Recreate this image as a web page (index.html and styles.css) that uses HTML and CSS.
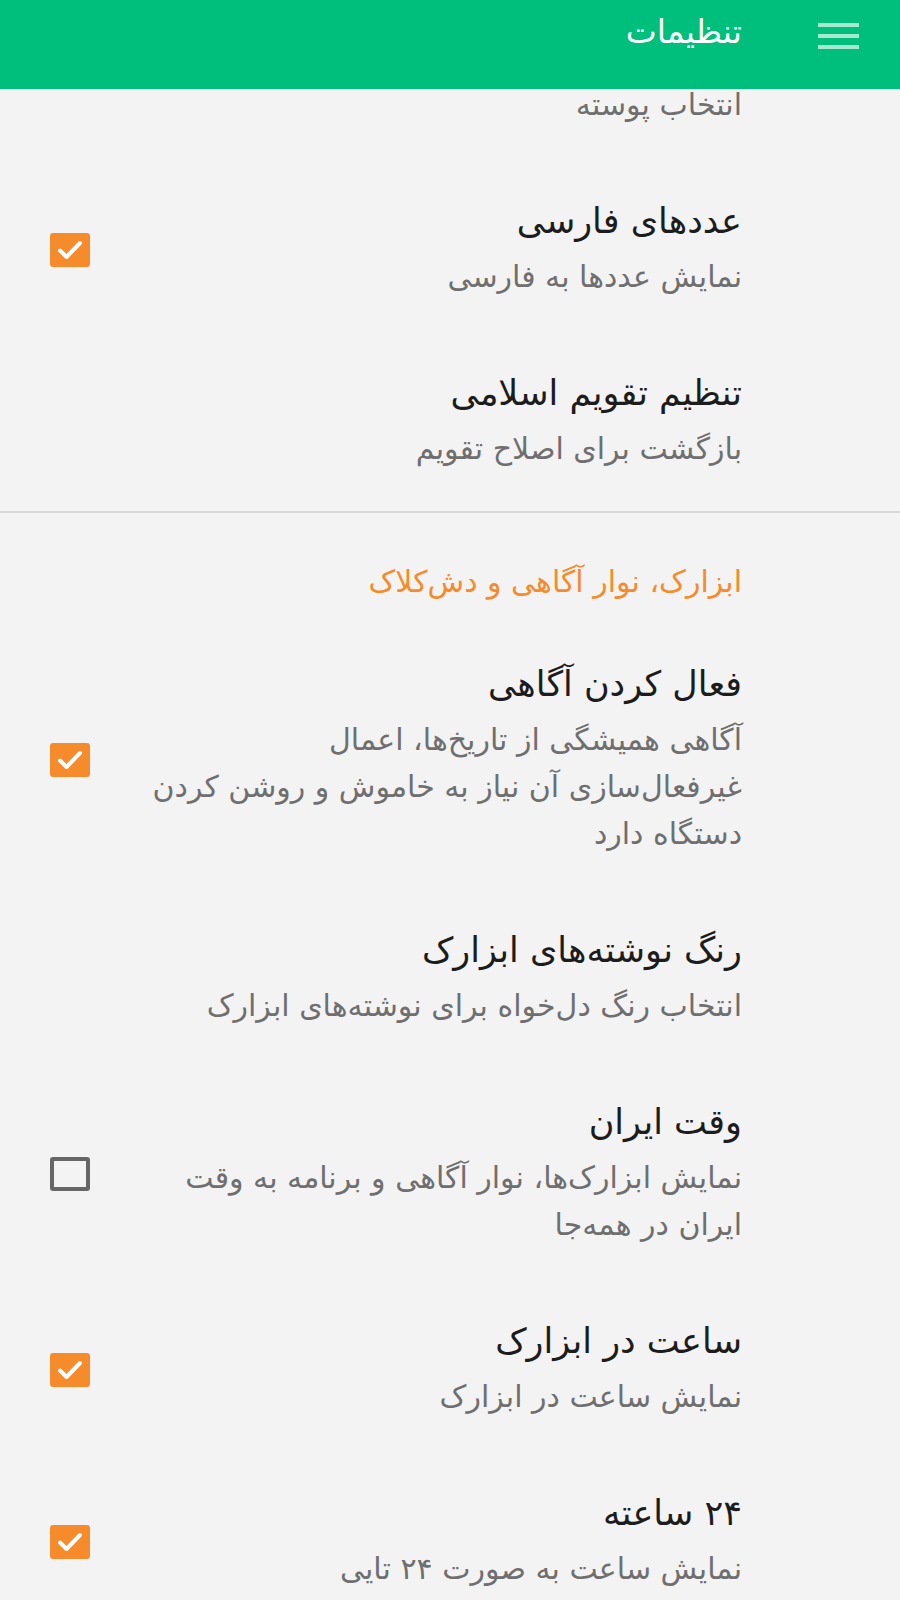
FILE: index.html
```html
<!DOCTYPE html>
<html lang="fa" dir="rtl">
<head>
  <meta charset="utf-8">
  <title>تنظیمات</title>
  <link rel="stylesheet" href="styles.css">
</head>

<body>
  <header class="appbar">
    <div class="menu-btn">
      <span></span>
      <span></span>
      <span></span>
    </div>
    <div class="appbar-title">تنظیمات</div>
  </header>

  <div class="pref-list">
    <!-- first item is scrolled under the toolbar, only its summary shows -->
    <div class="pref clipped">
      <div class="pref-text">
        <div class="pref-summary">انتخاب پوسته</div>
      </div>
    </div>

    <div class="pref">
      <div class="pref-text">
        <div class="pref-title">عددهای فارسی</div>
        <div class="pref-summary">نمایش عددها به فارسی</div>
      </div>
      <div class="pref-widget">
        <span class="checkbox checked"><svg viewBox="0 0 40 34"><polyline points="10,17.5 16.5,24 30,10"></polyline></svg></span>
      </div>
    </div>

    <div class="pref">
      <div class="pref-text">
        <div class="pref-title">تنظیم تقویم اسلامی</div>
        <div class="pref-summary">بازگشت برای اصلاح تقویم</div>
      </div>
    </div>

    <div class="divider"></div>

    <div class="category">ابزارک، نوار آگاهی و دش&zwnj;کلاک</div>

    <div class="pref">
      <div class="pref-text">
        <div class="pref-title">فعال کردن آگاهی</div>
        <div class="pref-summary">آگاهی همیشگی از تاریخ&zwnj;ها، اعمال<br>غیرفعال&zwnj;سازی آن نیاز به خاموش و روشن کردن<br>دستگاه دارد</div>
      </div>
      <div class="pref-widget">
        <span class="checkbox checked"><svg viewBox="0 0 40 34"><polyline points="10,17.5 16.5,24 30,10"></polyline></svg></span>
      </div>
    </div>

    <div class="pref">
      <div class="pref-text">
        <div class="pref-title">رنگ نوشته&zwnj;های ابزارک</div>
        <div class="pref-summary">انتخاب رنگ دل&zwnj;خواه برای نوشته&zwnj;های ابزارک</div>
      </div>
    </div>

    <div class="pref">
      <div class="pref-text">
        <div class="pref-title">وقت ایران</div>
        <div class="pref-summary">نمایش ابزارک&zwnj;ها، نوار آگاهی و برنامه به وقت<br>ایران در همه&zwnj;جا</div>
      </div>
      <div class="pref-widget">
        <span class="checkbox"></span>
      </div>
    </div>

    <div class="pref">
      <div class="pref-text">
        <div class="pref-title">ساعت در ابزارک</div>
        <div class="pref-summary">نمایش ساعت در ابزارک</div>
      </div>
      <div class="pref-widget">
        <span class="checkbox checked"><svg viewBox="0 0 40 34"><polyline points="10,17.5 16.5,24 30,10"></polyline></svg></span>
      </div>
    </div>

    <div class="pref">
      <div class="pref-text">
        <div class="pref-title">۲۴ ساعته</div>
        <div class="pref-summary">نمایش ساعت به صورت ۲۴ تایی</div>
      </div>
      <div class="pref-widget">
        <span class="checkbox checked"><svg viewBox="0 0 40 34"><polyline points="10,17.5 16.5,24 30,10"></polyline></svg></span>
      </div>
    </div>
  </div>
</body>
</html>
```

FILE: styles.css
```css
body {
  margin: 0;
  background-color: #f3f3f3;
  font-family: "DejaVu Sans", sans-serif;
  direction: rtl;
}

.appbar {
  height: 89px;
  background-color: #00bf7d;
  display: flex;
  align-items: flex-start;
  padding: 0 41px 0 0;
  box-sizing: border-box;
}

.menu-btn {
  width: 41px;
  margin-top: 23px;
  display: flex;
  flex-direction: column;
  gap: 7px;
}

.menu-btn span {
  display: block;
  height: 4px;
  background-color: rgba(255, 255, 255, 0.65);
}

.appbar-title {
  margin-right: 76px;
  margin-top: 11px;
  color: #fff;
  font-size: 33px;
  line-height: 42px;
}

.pref {
  display: flex;
  align-items: center;
  padding: 36px 158px 35px 0;
}

.pref.clipped {
  padding-top: 0;
  padding-bottom: 42px;
}

.pref.clipped .pref-summary {
  line-height: 32px;
}

.pref-text {
  flex: 1;
}

.pref-title {
  font-size: 35px;
  line-height: 44px;
  color: #1c1c1c;
  margin-bottom: 10px;
}

.pref-summary {
  font-size: 30px;
  line-height: 47px;
  color: #6f6f6f;
}

.pref-widget {
  width: 150px;
  display: flex;
  justify-content: flex-end;
  padding-left: 50px;
  box-sizing: border-box;
}

.checkbox {
  display: block;
  width: 40px;
  height: 34px;
  border: 4px solid #666;
  border-radius: 3px;
  box-sizing: border-box;
}

.checkbox.checked {
  border: none;
  background-color: #f68b2c;
}

.checkbox svg {
  display: block;
  width: 40px;
  height: 34px;
}

.checkbox polyline {
  fill: none;
  stroke: #fff;
  stroke-width: 4;
  stroke-linecap: round;
  stroke-linejoin: round;
}

.divider {
  height: 2px;
  background-color: #d6d6d6;
  margin-top: 4px;
}

.category {
  padding: 49px 158px 24px 0;
  font-size: 30px;
  line-height: 40px;
  color: #f68b2c;
}
```
